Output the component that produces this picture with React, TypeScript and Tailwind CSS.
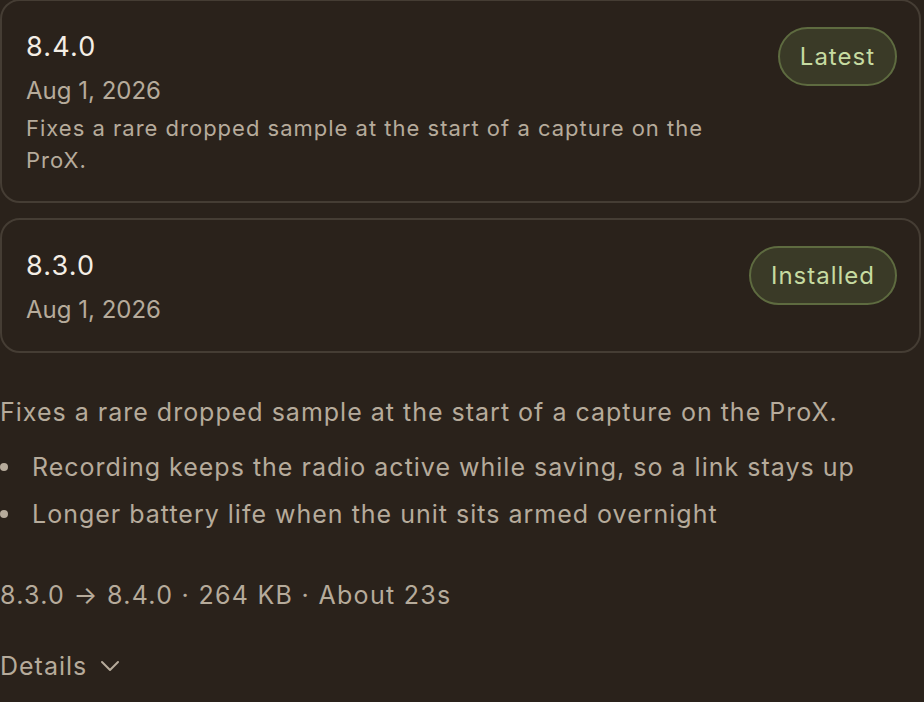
import React from 'react';

const releases = [
  {
    version: '8.4.0',
    date: 'Aug 1, 2026',
    note: 'Fixes a rare dropped sample at the start of a capture on the ProX.',
    badge: 'Latest',
  },
  {
    version: '8.3.0',
    date: 'Aug 1, 2026',
    badge: 'Installed',
  },
];

const changes = [
  'Recording keeps the radio active while saving, so a link stays up',
  'Longer battery life when the unit sits armed overnight',
];

const ReleaseCard: React.FC<{ version: string; date: string; note?: string; badge: string }> = ({
  version,
  date,
  note,
  badge,
}) => (
  <div className="flex items-start justify-between rounded-[20px] border-2 border-[#453d34] bg-[#2a221b] pl-[24px] pr-[22px] pt-[26px] pb-[25px]">
    <div className="flex flex-col">
      <div className="mt-[2px] text-[27px] leading-9 tracking-[1.2px] text-[#f4eee5]">{version}</div>
      <div className="mt-[10px] text-[24px] leading-8 text-[#b6ab9b]">{date}</div>
      {note && (
        <div className="mt-[5px] max-w-[690px] text-[22px] leading-8 tracking-[1px] text-[#b6ab9b]">{note}</div>
      )}
    </div>
    <span className="flex h-[59px] items-center rounded-full border-2 border-[#5e6b40] bg-[#3a3a27] px-[20px] text-[24px] tracking-[1px] text-[#c6dba1]">
      {badge}
    </span>
  </div>
);

export default function App() {
  return (
    <div className="min-h-screen overflow-hidden bg-[#2a221b] font-['Inter',sans-serif]">
      <div className="-mt-px mr-[3px] flex flex-col gap-[15px]">
        {releases.map((r) => (
          <ReleaseCard key={r.version} {...r} />
        ))}
      </div>

      <div className="mt-[43px] text-[25px] leading-8 tracking-[1px] text-[#b6ab9b]">
        <p>Fixes a rare dropped sample at the start of a capture on the ProX.</p>
        <ul className="mt-[23px] flex flex-col gap-[15px]">
          {changes.map((c) => (
            <li key={c} className="flex items-center gap-[24px]">
              <span className="h-2 w-2 shrink-0 rounded-full bg-[#b6ab9b]" />
              <span>{c}</span>
            </li>
          ))}
        </ul>
        <p className="mt-[49px] tracking-[1.3px]">8.3.0 → 8.4.0 · 264 KB · About 23s</p>
        <button className="mt-[39px] flex items-center gap-[13px] tracking-[1px]">
          Details
          <svg width="20" height="14" viewBox="0 0 20 14" fill="none" stroke="currentColor" strokeWidth="2" strokeLinecap="round" strokeLinejoin="round">
            <polyline points="2,3 10,11 18,3" />
          </svg>
        </button>
      </div>
    </div>
  );
}
